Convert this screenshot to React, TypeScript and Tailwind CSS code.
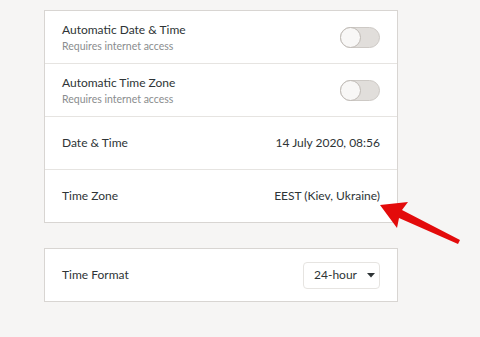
import React from "react";

const font = { fontFamily: "Lato, 'Noto Sans', sans-serif" };

function Toggle() {
  return (
    <div className="relative w-[40px] h-[21px] rounded-full bg-[#e1dedb] border border-[#cdc9c5]">
      <div className="absolute left-[-1px] top-[-1px] w-[21px] h-[21px] rounded-full bg-[#f8f7f6] border border-[#bfbab5]" />
    </div>
  );
}

function Row({ children, last }: { children: React.ReactNode; last?: boolean }) {
  return (
    <div className={"flex items-center justify-between pl-[17px] pr-[17px] " + (last ? "h-[52px]" : "h-[53px] border-b border-[#e6e4e1]")}>
      {children}
    </div>
  );
}

export default function App() {
  return (
    <div className="relative w-[480px] h-[337px] overflow-hidden bg-[#f6f5f4] text-[#2e3436]" style={font}>
      <div className="pt-[10px] pl-[44px]">
        <div className="w-[354px] bg-white border border-[#d8d5d2]">
          <Row>
            <div className="flex flex-col">
              <span className="text-[12px] leading-[16px]">Automatic Date &amp; Time</span>
              <span className="text-[10.5px] leading-[14px] mt-[1px] text-[#8a8d8e]">Requires internet access</span>
            </div>
            <Toggle />
          </Row>
          <Row>
            <div className="flex flex-col">
              <span className="text-[12px] leading-[16px]">Automatic Time Zone</span>
              <span className="text-[10.5px] leading-[14px] mt-[1px] text-[#8a8d8e]">Requires internet access</span>
            </div>
            <Toggle />
          </Row>
          <Row>
            <span className="text-[12px]">Date &amp; Time</span>
            <span className="text-[12px]">14 July 2020, 08:56</span>
          </Row>
          <Row last>
            <span className="text-[12px]">Time Zone</span>
            <span className="text-[12px]">EEST (Kiev, Ukraine)</span>
          </Row>
        </div>
        <div className="w-[354px] mt-[25px] bg-white border border-[#d8d5d2]">
          <Row last>
            <span className="text-[12px]">Time Format</span>
            <div className="w-[77px] h-[27px] rounded-[4px] border border-[#e6e4e1] flex items-center pl-[10px] gap-[10px]">
              <span className="text-[12px]">24-hour</span>
              <svg width="8" height="5" viewBox="0 0 8 5">
                <path d="M0 0 L8 0 L4 4.5 Z" fill="#2e3436" />
              </svg>
            </div>
          </Row>
        </div>
      </div>
      <svg className="absolute left-0 top-0" width="480" height="337" viewBox="0 0 480 337">
        <polygon
          points="380,205 408,202 402,210 460,240 458,244 399,218 397,228"
          fill="#e30b0b"
        />
      </svg>
    </div>
  );
}
